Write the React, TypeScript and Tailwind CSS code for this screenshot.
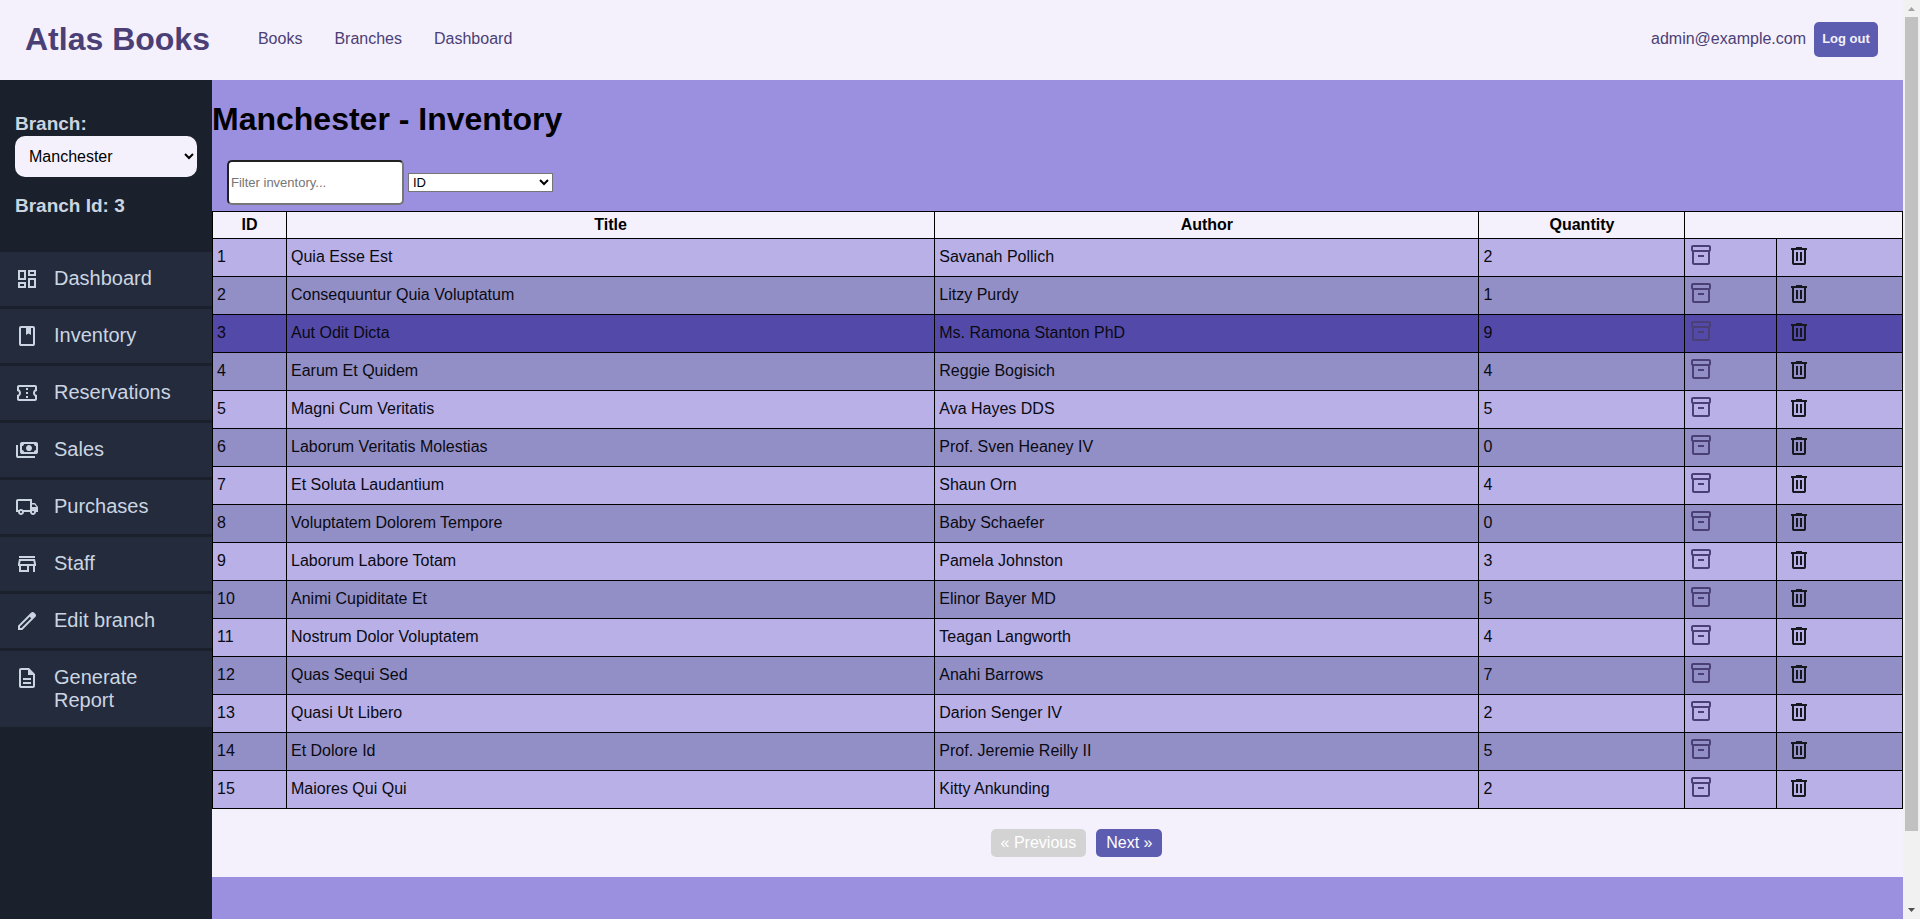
import React from "react";
import {
  MdOutlineConfirmationNumber,
  MdOutlineDashboard,
  MdOutlineDescription,
  MdOutlineInventory2,
  MdOutlineLocalShipping,
  MdOutlineStore,
} from "react-icons/md";

function Symbol({ d, className = "size-6" }: { d: string; className?: string }) {
  return (
    <svg viewBox="0 -960 960 960" fill="currentColor" aria-hidden="true" className={`${className} shrink-0`}>
      <path d={d} />
    </svg>
  );
}

const BOOK =
  "M240-80q-33 0-56.5-23.5T160-160v-640q0-33 23.5-56.5T240-880h480q33 0 56.5 23.5T800-800v640q0 33-23.5 56.5T720-80H240Zm0-80h480v-640h-80v280l-100-60-100 60v-280H240v640Z";
const PAYMENTS =
  "M560-440q-50 0-85-35t-35-85q0-50 35-85t85-35q50 0 85 35t35 85q0 50-35 85t-85 35ZM280-320q-33 0-56.5-23.5T200-400v-320q0-33 23.5-56.5T280-800h560q33 0 56.5 23.5T920-720v320q0 33-23.5 56.5T840-320H280Zm80-80h400q0-33 23.5-56.5T840-480v-160q-33 0-56.5-23.5T760-720H360q0 33-23.5 56.5T280-640v160q33 0 56.5 23.5T360-400Zm440 240H120q-33 0-56.5-23.5T40-240v-440h80v440h680v80Z";
const EDIT =
  "M200-200h57l391-391-57-57-391 391v57Zm-80 80v-170l528-527q12-11 26.5-17t30.5-6q16 0 31 6t26 18l55 56q12 11 17.5 26t5.5 30q0 16-5.5 30.5T817-647L290-120H120Zm640-584-56-56 56 56Z";
const DELETE =
  "M280-120q-33 0-56.5-23.5T200-200v-520h-40v-80h200v-40h240v40h200v80h-40v520q0 33-23.5 56.5T680-120H280Zm400-600H280v520h400v-520ZM360-280h80v-360h-80v360Zm160 0h80v-360h-80v360Z";

const icon = "size-6 shrink-0";

const menu = [
  { label: "Dashboard", icon: <MdOutlineDashboard className={icon} /> },
  { label: "Inventory", icon: <Symbol d={BOOK} /> },
  { label: "Reservations", icon: <MdOutlineConfirmationNumber className={icon} /> },
  { label: "Sales", icon: <Symbol d={PAYMENTS} /> },
  { label: "Purchases", icon: <MdOutlineLocalShipping className={icon} /> },
  { label: "Staff", icon: <MdOutlineStore className={icon} /> },
  { label: "Edit branch", icon: <Symbol d={EDIT} /> },
  { label: "Generate Report", icon: <MdOutlineDescription className={icon} /> },
];

const books: { id: number; title: string; author: string; quantity: number; active?: boolean }[] = [
  { id: 1, title: "Quia Esse Est", author: "Savanah Pollich", quantity: 2 },
  { id: 2, title: "Consequuntur Quia Voluptatum", author: "Litzy Purdy", quantity: 1 },
  { id: 3, title: "Aut Odit Dicta", author: "Ms. Ramona Stanton PhD", quantity: 9, active: true },
  { id: 4, title: "Earum Et Quidem", author: "Reggie Bogisich", quantity: 4 },
  { id: 5, title: "Magni Cum Veritatis", author: "Ava Hayes DDS", quantity: 5 },
  { id: 6, title: "Laborum Veritatis Molestias", author: "Prof. Sven Heaney IV", quantity: 0 },
  { id: 7, title: "Et Soluta Laudantium", author: "Shaun Orn", quantity: 4 },
  { id: 8, title: "Voluptatem Dolorem Tempore", author: "Baby Schaefer", quantity: 0 },
  { id: 9, title: "Laborum Labore Totam", author: "Pamela Johnston", quantity: 3 },
  { id: 10, title: "Animi Cupiditate Et", author: "Elinor Bayer MD", quantity: 5 },
  { id: 11, title: "Nostrum Dolor Voluptatem", author: "Teagan Langworth", quantity: 4 },
  { id: 12, title: "Quas Sequi Sed", author: "Anahi Barrows", quantity: 7 },
  { id: 13, title: "Quasi Ut Libero", author: "Darion Senger IV", quantity: 2 },
  { id: 14, title: "Et Dolore Id", author: "Prof. Jeremie Reilly II", quantity: 5 },
  { id: 15, title: "Maiores Qui Qui", author: "Kitty Ankunding", quantity: 2 },
];

function Header() {
  return (
    <header className="flex h-20 items-center bg-[#f4f1fc] px-[25px] pb-[2px] text-[#4b4076]">
      <a href="#" className="text-[32px] leading-9 font-bold">
        Atlas Books
      </a>
      <nav className="ml-12 flex gap-8">
        <a href="#books">Books</a>
        <a href="#branches">Branches</a>
        <a href="#dashboard">Dashboard</a>
      </nav>
      <div className="ml-auto flex items-center gap-2">
        <span>admin@example.com</span>
        <button type="button" className="h-[35px] w-16 rounded-[5px] bg-[#5c5cb0] text-[13px] font-bold text-[#f4f1fc]">
          Log out
        </button>
      </div>
    </header>
  );
}

function Sidebar() {
  return (
    <aside className="w-[212px] shrink-0 bg-[#1b212c] text-[#cbd5e1]">
      <div className="px-[15px] pt-8 pb-[34px] text-[19px] leading-6 font-bold">
        <label htmlFor="branch" className="block leading-6">
          Branch:
        </label>
        <select
          id="branch"
          className="block h-[41px] w-full rounded-[10px] bg-[#f4f1fc] px-[10px] text-base font-normal text-black"
        >
          <option>Manchester</option>
        </select>
        <p className="mt-[17px]">Branch Id: 3</p>
      </div>
      <nav className="flex flex-col gap-[3px]">
        {menu.map((item) => (
          <a
            key={item.label}
            href="#"
            className="flex items-start gap-[15px] bg-[#242b3d] p-[15px] text-xl leading-[23px]"
          >
            {item.icon}
            <span>{item.label}</span>
          </a>
        ))}
      </nav>
    </aside>
  );
}

function InventoryTable() {
  return (
    <table className="w-full table-fixed border-collapse bg-[#f4f1fc] text-left">
      <colgroup>
        <col className="w-[74px]" />
        <col className="w-[38.36%]" />
        <col className="w-[32.2%]" />
        <col className="w-[206px]" />
        <col className="w-[92px]" />
        <col />
      </colgroup>
      <thead>
        <tr className="h-[27px] text-center">
          <th className="border border-black">ID</th>
          <th className="border border-black">Title</th>
          <th className="border border-black">Author</th>
          <th className="border border-black">Quantity</th>
          <td colSpan={2} className="border border-black" />
        </tr>
      </thead>
      <tbody>
        {books.map((book) => (
          <tr
            key={book.id}
            className={`h-[38px] text-[#0a0a12] ${
              book.active ? "bg-[#5349a9]" : book.id % 2 ? "bg-[#b8b0e7]" : "bg-[#928fc6]"
            }`}
          >
            <td className="border border-black px-1 pb-[2px]">{book.id}</td>
            <td className="border border-black px-1 pb-[2px]">{book.title}</td>
            <td className="border border-black px-1 pb-[2px]">{book.author}</td>
            <td className="border border-black px-1 pb-[2px]">{book.quantity}</td>
            <td className="border border-black px-1 align-top">
              <button type="button" aria-label="Update stock" className="mt-1 block text-[#4b4076]">
                <MdOutlineInventory2 className={icon} />
              </button>
            </td>
            <td className="border border-black px-[10px] align-top">
              <button type="button" aria-label="Delete" className="mt-[5px] block text-[#17171f]">
                <Symbol d={DELETE} />
              </button>
            </td>
          </tr>
        ))}
      </tbody>
    </table>
  );
}

function ScrollBar() {
  return (
    <div aria-hidden="true" className="flex w-[17px] shrink-0 flex-col items-center bg-[#f1f1f1]">
      <svg viewBox="0 0 17 17" className="size-[17px] shrink-0">
        <path d="M5 11 8.5 7 12 11Z" fill="#a3a3a3" />
      </svg>
      <div className="flex w-[13px] flex-1 flex-col">
        <div className="basis-[92%] bg-[#c1c1c1]" />
      </div>
      <svg viewBox="0 0 17 17" className="size-[17px] shrink-0">
        <path d="M5 6 8.5 10 12 6Z" fill="#505050" />
      </svg>
    </div>
  );
}

export default function App() {
  return (
    <div className="flex min-h-screen font-['Liberation_Sans',Arial,sans-serif] text-base leading-[18px] text-black">
      <div className="flex min-w-0 flex-1 flex-col">
        <Header />
        <div className="flex flex-1">
          <Sidebar />
          <main className="min-w-0 flex-1 bg-[#9b8fdf]">
            <h1 className="pt-[21px] text-[32px] leading-9 font-bold">Manchester - Inventory</h1>
            <div className="flex items-center gap-1 pt-[23px] pb-[6px] pl-[15px]">
              <input
                type="text"
                aria-label="Filter inventory"
                placeholder="Filter inventory..."
                className="h-[45px] w-[177px] rounded-[5px] border-2 border-t-[#212121] border-r-[#767676] border-b-[#767676] border-l-[#212121] bg-white px-[2px] text-[13px] placeholder:text-[#757575]"
              />
              <select
                aria-label="Filter by"
                className="h-[19px] w-[145px] rounded-none border border-[#767676] bg-white text-[13px] text-black"
              >
                <option>ID</option>
                <option>Title</option>
                <option>Author</option>
                <option>Quantity</option>
              </select>
            </div>
            <InventoryTable />
            <div className="flex justify-center gap-[10px] bg-[#f4f1fc] py-5 pl-[38px]">
              <button type="button" disabled className="rounded-[5px] bg-[#d3d3d3] px-[10px] py-[5px] text-white">
                « Previous
              </button>
              <button type="button" className="rounded-[5px] bg-[#5c5cb0] px-[10px] py-[5px] text-white">
                Next »
              </button>
            </div>
          </main>
        </div>
      </div>
      <ScrollBar />
    </div>
  );
}
